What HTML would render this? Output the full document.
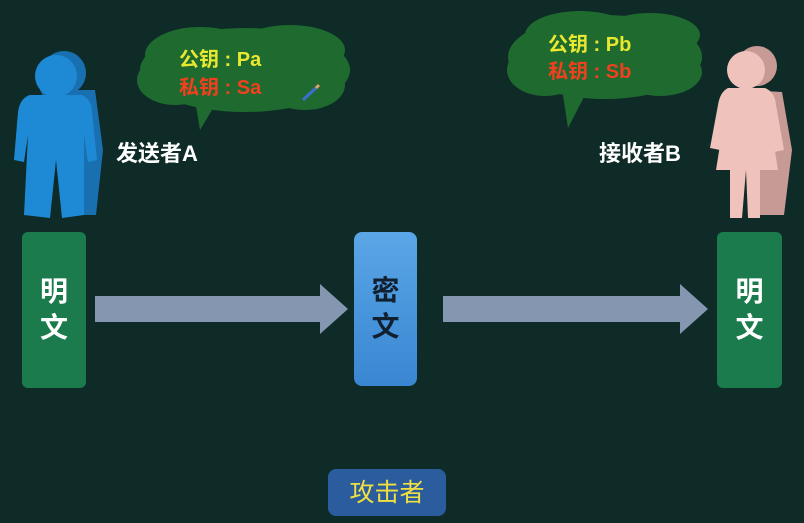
<!DOCTYPE html>
<html><head><meta charset="utf-8"><style>
body{margin:0;width:804px;height:523px;background:#0e2b28;overflow:hidden;position:relative;font-family:"Liberation Sans","Noto Sans CJK SC",sans-serif;font-weight:bold}
.abs{position:absolute}
.box{position:absolute;border-radius:6px;color:#fff;font-size:28px;display:flex;flex-direction:column;align-items:center;justify-content:center;line-height:36px}
.lbl{position:absolute;color:#fff;font-size:22px}
.k{position:absolute;font-size:20px;line-height:27px;white-space:pre}
</style></head><body>
<svg class="abs" style="left:0;top:0" width="804" height="523">
<g fill="#1f6a2e">
<ellipse cx="245" cy="70" rx="105" ry="42"/>
<ellipse cx="200" cy="55" rx="55" ry="28"/>
<ellipse cx="290" cy="50" rx="55" ry="25"/>
<ellipse cx="175" cy="80" rx="38" ry="25"/>
<ellipse cx="305" cy="85" rx="40" ry="25"/>
<path d="M195 100 L200 130 L218 100Z"/>
<ellipse cx="605" cy="57" rx="97" ry="42"/>
<ellipse cx="580" cy="35" rx="55" ry="24"/>
<ellipse cx="650" cy="35" rx="50" ry="22"/>
<ellipse cx="545" cy="70" rx="38" ry="26"/>
<ellipse cx="660" cy="72" rx="42" ry="24"/>
<path d="M563 95 L568 128 L585 95Z"/>
</g>
<line x1="303" y1="100" x2="318" y2="86" stroke="#3a6fd0" stroke-width="3"/>
<line x1="316" y1="88" x2="319" y2="85" stroke="#e0a060" stroke-width="3"/>
<g fill="#1870b0">
<circle cx="64" cy="73" r="22"/>
<path d="M40 90 L95 90 L103 150 L96 215 L70 215 L60 130Z"/>
</g>
<g fill="#1e8ad6">
<circle cx="56" cy="76" r="21"/>
<path d="M30 95 L82 95 Q92 100 92 112 L97 160 L88 162 L84 135 L84 215 L62 218 L56 160 L50 218 L24 215 L28 135 L24 162 L14 160 L18 112 Q20 98 30 95Z"/>
</g>
<g fill="#c79a96">
<circle cx="757" cy="66" r="20"/>
<path d="M745 90 L782 92 L792 150 L784 215 L760 215Z"/>
</g>
<g fill="#f0c2bc">
<circle cx="746" cy="70" r="19"/>
<path d="M728 88 L765 88 Q775 92 776 105 L784 150 L774 152 L770 120 L778 170 L760 170 L760 218 L748 218 L746 170 L742 218 L730 218 L730 170 L716 170 L724 120 L720 150 L710 148 L718 105 Q720 92 728 88Z"/>
</g>
<g fill="#8596b0">
<rect x="95" y="296" width="228" height="26"/>
<path d="M320 284 L348 309 L320 334Z"/>
<rect x="443" y="296" width="240" height="26"/>
<path d="M680 284 L708 309 L680 334Z"/>
</g>
</svg>
<div class="k" style="left:179px;top:47px;color:#e8e830">公钥 : Pa</div>
<div class="k" style="left:179px;top:75px;color:#f04020">私钥 : Sa</div>
<div class="k" style="left:548px;top:32px;color:#e8e830">公钥 : Pb</div>
<div class="k" style="left:548px;top:59px;color:#f04020">私钥 : Sb</div>
<div class="lbl" style="left:116px;top:136px">发送者A</div>
<div class="lbl" style="left:599px;top:136px">接收者B</div>
<div class="box" style="left:22px;top:232px;width:64px;height:156px;background:#1b7b4c">明<span>文</span></div>
<div class="box" style="left:354px;top:232px;width:63px;height:154px;background:linear-gradient(#5aa6e6,#3a86d2);color:#102030;border-radius:8px">密<span>文</span></div>
<div class="box" style="left:717px;top:232px;width:65px;height:156px;background:#1b7b4c">明<span>文</span></div>
<div class="box" style="left:328px;top:469px;width:118px;height:47px;background:#2b5c9e;color:#f0e040;font-weight:normal;font-size:25px;flex-direction:row;border-radius:8px">攻击者</div>
</body></html>
